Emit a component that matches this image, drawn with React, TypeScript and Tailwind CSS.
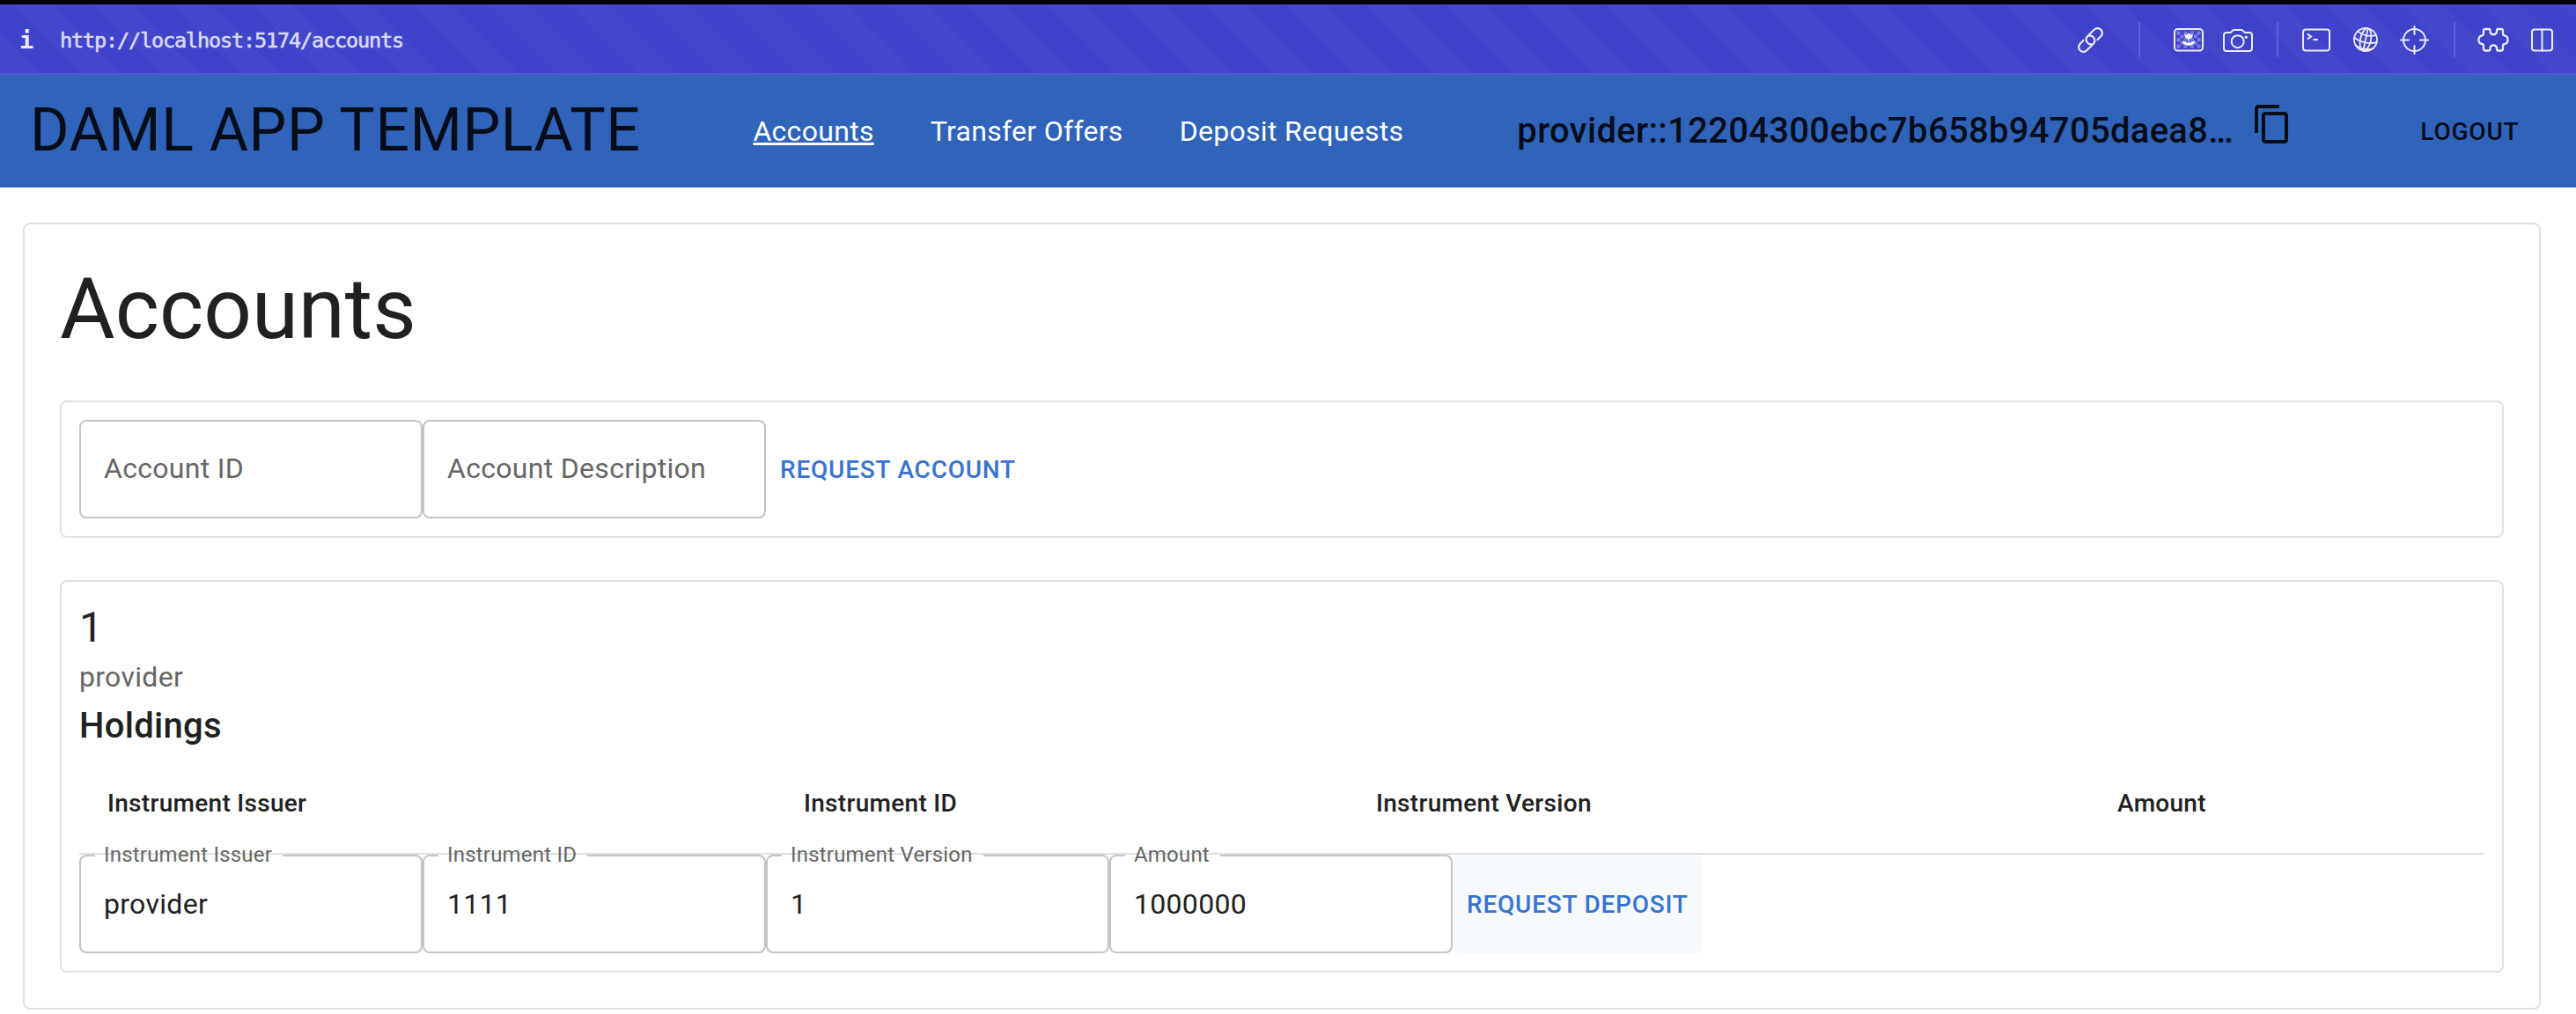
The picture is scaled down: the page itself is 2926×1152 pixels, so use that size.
import type { ReactNode } from "react";

function BarIcon({ width, className = "", children }: { width: number; className?: string; children: ReactNode }) {
  return (
    <svg
      width={width}
      height={40}
      viewBox={`0 0 ${width} 40`}
      className={`shrink-0 overflow-visible ${className}`}
      fill="none"
      stroke="#ebebfb"
      strokeWidth={2}
      strokeLinecap="round"
      strokeLinejoin="round"
    >
      {children}
    </svg>
  );
}

function Divider({ className = "" }: { className?: string }) {
  return <div className={`h-10 w-0.5 shrink-0 bg-[#5d5fe0] ${className}`} />;
}

const checks = [0, 1, 2, 3, 4].flatMap((row) =>
  [0, 1, 2, 3, 4, 5, 6].filter((col) => (row + col) % 2 === 0).map((col) => ({ x: 3.6 + col * 3.85, y: 10.6 + row * 3.8 })),
);

function BrowserBar() {
  return (
    <div className="flex h-20 items-start border-b-2 border-[#5355d2] bg-[repeating-linear-gradient(45deg,#4347cb_0_32px,#3f43c9_32px_64px)] font-['DejaVu_Sans_Mono',monospace]">
      <span className="ml-[22px] w-[46px] pt-[27px] text-[27px] leading-7 font-bold text-[#ebebfb]">i</span>
      <span className="pt-[27px] text-[23.5px] leading-7 tracking-[-1.15px] text-[#d9d9f6] [-webkit-text-stroke:0.6px_#d9d9f6]">
        http://localhost:5174/accounts
      </span>
      <div className="mt-5 mr-[26px] ml-auto flex">
        <BarIcon width={29}>
          <g transform="translate(14.5 20.5) rotate(-45)" strokeWidth={2.2} strokeLinecap="butt">
            <path d="M-5 -5.4 H-11.3 A5.4 5.4 0 0 0 -11.3 5.4 H-1 A5.4 5.4 0 0 0 1.8 -4.7" />
            <path d="M5 5.4 H11.3 A5.4 5.4 0 0 0 11.3 -5.4 H1 A5.4 5.4 0 0 0 -1.8 4.7" />
          </g>
        </BarIcon>
        <Divider className="ml-10" />
        <BarIcon width={34} className="ml-[38px]">
          <rect x="1" y="8" width="32" height="24.5" rx="3.5" />
          <g stroke="none">
            {checks.map((c) => (
              <rect key={`${c.x}-${c.y}`} x={c.x} y={c.y} width="3.85" height="3.8" fill="#7f81df" />
            ))}
            <path
              d="M12 12.3 L14.6 14 L17 11.8 L19.4 14 L22 12.3 V15.5 Q22 19.5 18 20 V23.5 Q20.5 20.8 25 21 Q24.5 26.8 17.8 27.2 H16.2 Q9.5 26.8 9 21 Q13.5 20.8 16 23.5 V20 Q12 19.5 12 15.5 Z"
              fill="#f3f3fd"
              stroke="#4145ca"
              strokeWidth="0.8"
            />
          </g>
        </BarIcon>
        <BarIcon width={34} className="ml-[22px]">
          <path d="M4 12 H8 Q9 12 9.6 11.2 L10.8 9.8 Q11.5 9 12.6 9 H20.8 Q22 9 22.6 9.8 L23.8 11.2 Q24.4 12 25.4 12 H30 Q33 12 33 15 V30 Q33 33 30 33 H4 Q1 33 1 30 V15 Q1 12 4 12 Z" />
          <circle cx="16.7" cy="22.2" r="7" />
          <circle cx="26.3" cy="17.3" r="1.7" fill="#ebebfb" stroke="none" />
        </BarIcon>
        <Divider className="ml-[27px]" />
        <BarIcon width={32} className="ml-[27px]">
          <rect x="1" y="8.5" width="30" height="24" rx="3" />
          <path d="M5.8 13.5 L10 16.5 L5.8 19.5 M12.5 20 H18" strokeLinecap="butt" strokeLinejoin="miter" />
        </BarIcon>
        <BarIcon width={28} className="ml-[26px]">
          <g transform="rotate(12 14 20)" strokeWidth={1.8}>
            <circle cx="14" cy="20" r="13" />
            <ellipse cx="14" cy="20" rx="6" ry="13" />
            <path d="M14 7 V33 M3.2 12.5 Q14 18 24.8 12.5 M1 20.5 Q14 26.5 27 20.5 M4 28.5 Q14 33 24 28.5" />
          </g>
        </BarIcon>
        <BarIcon width={33} className="ml-[25px]">
          <circle cx="16.5" cy="20.5" r="12.5" />
          <path d="M16.5 5 V14 M16.5 27 V36 M1 20.5 H10 M23 20.5 H32" />
        </BarIcon>
        <Divider className="ml-7" />
        <BarIcon width={38} className="ml-6">
          <path
            strokeWidth={2.3}
            d="M10 8 H14 Q15.5 8 15.5 10 V11 A3.8 3.8 0 0 0 23 11 V10 Q23 8 24.5 8 H28 Q30 8 30 10 V13.5 Q30 15 31.8 15.3 A5 5 0 0 1 31.8 25 Q30 25.2 30 27 V30 Q30 32.5 28 32.5 H24.5 Q23 32.5 23 30.5 V29.5 A3.8 3.8 0 0 0 15.5 29.5 V30.5 Q15.5 32.5 14 32.5 H10 Q8 32.5 8 30.5 V27 Q8 25.2 6.2 25 A5 5 0 0 1 6.2 15.3 Q8 15 8 13.5 V10 Q8 8 10 8 Z"
          />
        </BarIcon>
        <BarIcon width={25} className="ml-6">
          <rect x="1" y="8.5" width="23" height="24" rx="3" />
          <path d="M12.5 8.5 V32.5" />
        </BarIcon>
      </div>
    </div>
  );
}

function AppHeader() {
  return (
    <header className="flex h-32 items-center bg-[#2f64ba] text-[#060d18]">
      <span className="ml-[34px] pb-0.5 text-[68px] leading-none tracking-[0.5px]">DAML APP TEMPLATE</span>
      <nav className="ml-32 flex gap-16 text-[32px] leading-[48px] tracking-[0.3px] text-white">
        <a className="underline">Accounts</a>
        <a>Transfer Offers</a>
        <a>Deposit Requests</a>
      </nav>
      <span className="ml-[129px] w-[834px] text-[40px] leading-[64px] font-medium tracking-[0.3px] whitespace-nowrap">
        provider::12204300ebc7b658b94705daea8…
      </span>
      <svg className="mb-4 shrink-0" width="48" height="48" viewBox="0 0 24 24" fill="currentColor">
        <path d="M16 1H4c-1.1 0-2 .9-2 2v14h2V3h12V1zm3 4H8c-1.1 0-2 .9-2 2v14c0 1.1.9 2 2 2h11c1.1 0 2-.9 2-2V7c0-1.1-.9-2-2-2zm0 16H8V7h11v14z" />
      </svg>
      <button className="ml-32 px-4 text-[28px] leading-[49px] font-medium tracking-[0.8px]">LOGOUT</button>
    </header>
  );
}

function Field({ label, value }: { label: string; value?: string }) {
  if (value === undefined) {
    return (
      <div className="flex h-28 w-[390px] items-center rounded-lg border-2 border-[#c4c4c4] px-[26px] pb-0.5 text-[32px] tracking-[0.3px] text-[#666666]">
        {label}
      </div>
    );
  }
  return (
    <div className="relative flex h-28 w-[390px] items-center px-7 text-[32px] tracking-[0.3px]">
      {value}
      <fieldset className="absolute inset-x-0 -top-2.5 bottom-0 rounded-lg border-2 border-[#c4c4c4] px-4">
        <legend className="h-[22px] pr-3 pl-2.5 text-2xl leading-5 tracking-[0.2px] text-[#666666]">{label}</legend>
      </fieldset>
    </div>
  );
}

function ActionButton({ children, hovered }: { children: ReactNode; hovered?: boolean }) {
  return (
    <button
      className={`rounded-lg px-4 text-[28px] leading-[49px] font-medium tracking-[0.78px] text-[#3874cf] ${hovered ? "bg-[#f6fafd]" : ""}`}
    >
      {children}
    </button>
  );
}

export default function App() {
  return (
    <div className="h-[1152px] w-[2926px] overflow-hidden bg-white font-[Roboto,sans-serif] text-[#212121]">
      <div className="h-[5px] bg-black" />
      <BrowserBar />
      <AppHeader />
      <main className="mt-10 ml-[26px] w-[2860px] rounded-lg border-2 border-[#e0e0e0] p-10">
        <h1 className="text-[96px] leading-[112px]">Accounts</h1>
        <section className="mt-12 flex rounded-lg border-2 border-[#e0e0e0] p-5">
          <Field label="Account ID" />
          <Field label="Account Description" />
          <ActionButton>REQUEST ACCOUNT</ActionButton>
        </section>
        <section className="mt-12 rounded-lg border-2 border-[#e0e0e0] p-5">
          <h2 className="text-[48px] leading-[64px]">1</h2>
          <p className="text-[32px] leading-[48px] tracking-[0.3px] text-[#666666]">provider</p>
          <h3 className="text-[40px] leading-[64px] font-medium tracking-[0.3px]">Holdings</h3>
          <div className="grid h-[114px] grid-cols-[791px_650px_842px_449px] border-b-2 border-[#e0e0e0] text-[28px] leading-[48px] font-medium tracking-[0.3px]">
            <div className="p-8">Instrument Issuer</div>
            <div className="p-8">Instrument ID</div>
            <div className="p-8">Instrument Version</div>
            <div className="p-8">Amount</div>
          </div>
          <div className="flex">
            <Field label="Instrument Issuer" value="provider" />
            <Field label="Instrument ID" value="1111" />
            <Field label="Instrument Version" value="1" />
            <Field label="Amount" value="1000000" />
            <ActionButton hovered>REQUEST DEPOSIT</ActionButton>
          </div>
        </section>
      </main>
    </div>
  );
}
